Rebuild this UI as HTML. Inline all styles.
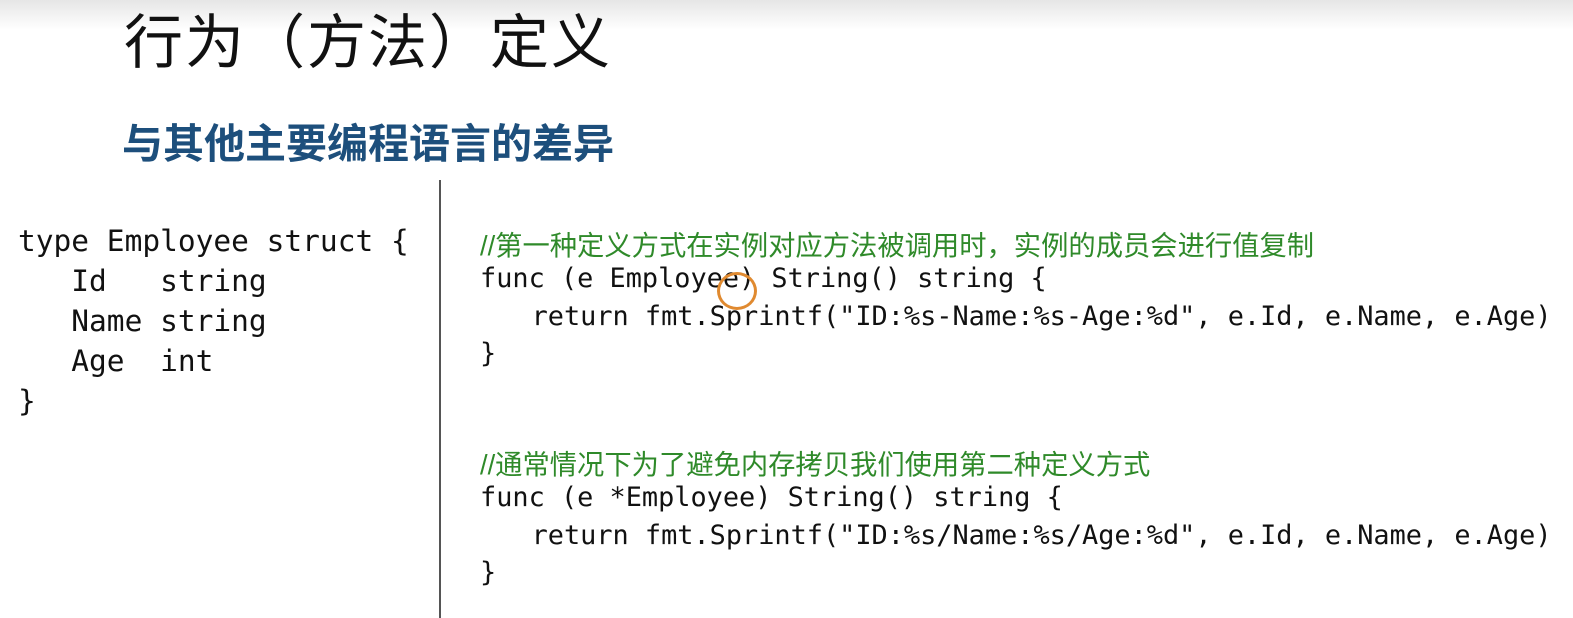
<!DOCTYPE html>
<html><head><meta charset="utf-8"><style>
body{margin:0;width:1573px;height:618px;overflow:hidden;background:#fff;position:relative;font-family:"Liberation Sans","Noto Sans CJK SC",sans-serif}
.top{position:absolute;left:0;top:0;width:1573px;height:30px;background:linear-gradient(#e6e6e6,#fff)}
.t{position:absolute;left:124px;top:-5px;font-size:59px;color:#111;white-space:nowrap;letter-spacing:2px}
.s{position:absolute;left:122px;top:110px;font-size:41px;font-weight:bold;color:#1d4f7c;white-space:nowrap}
.c{position:absolute;font-family:"DejaVu Sans Mono","Liberation Mono",monospace;white-space:pre;color:#111}
.l{font-size:29.5px;left:18px}
.r{font-size:26.9px}
.g{position:absolute;font-size:27.3px;color:#2f8a2a;white-space:nowrap;left:480px}
.v{position:absolute;left:439px;top:180px;width:2px;height:438px;background:#555}
</style></head><body>
<div class="top"></div>
<div class="t">行为（方法）定义</div>
<div class="s">与其他主要编程语言的差异</div>
<div class="v"></div>
<div class="c l" style="top:224px">type Employee struct {</div>
<div class="c l" style="top:264px">   Id   string</div>
<div class="c l" style="top:304px">   Name string</div>
<div class="c l" style="top:344px">   Age  int</div>
<div class="c l" style="top:384px">}</div>
<div class="g" style="top:223px">//第一种定义方式在实例对应方法被调用时，实例的成员会进行值复制</div>
<div class="c r" style="left:480px;top:263px">func (e Employee) String() string {</div>
<div class="c r" style="left:483px;top:301px">   return fmt.Sprintf("ID:%s-Name:%s-Age:%d", e.Id, e.Name, e.Age)</div>
<div class="c r" style="left:480px;top:338px">}</div>
<div class="g" style="top:442px">//通常情况下为了避免内存拷贝我们使用第二种定义方式</div>
<div class="c r" style="left:480px;top:482px">func (e *Employee) String() string {</div>
<div class="c r" style="left:483px;top:520px">   return fmt.Sprintf("ID:%s/Name:%s/Age:%d", e.Id, e.Name, e.Age)</div>
<div class="c r" style="left:480px;top:557px">}</div>
<div style="position:absolute;left:717px;top:272px;width:40px;height:38px;border:3px solid #e08a30;border-radius:50%;box-sizing:border-box"></div>
</body></html>
